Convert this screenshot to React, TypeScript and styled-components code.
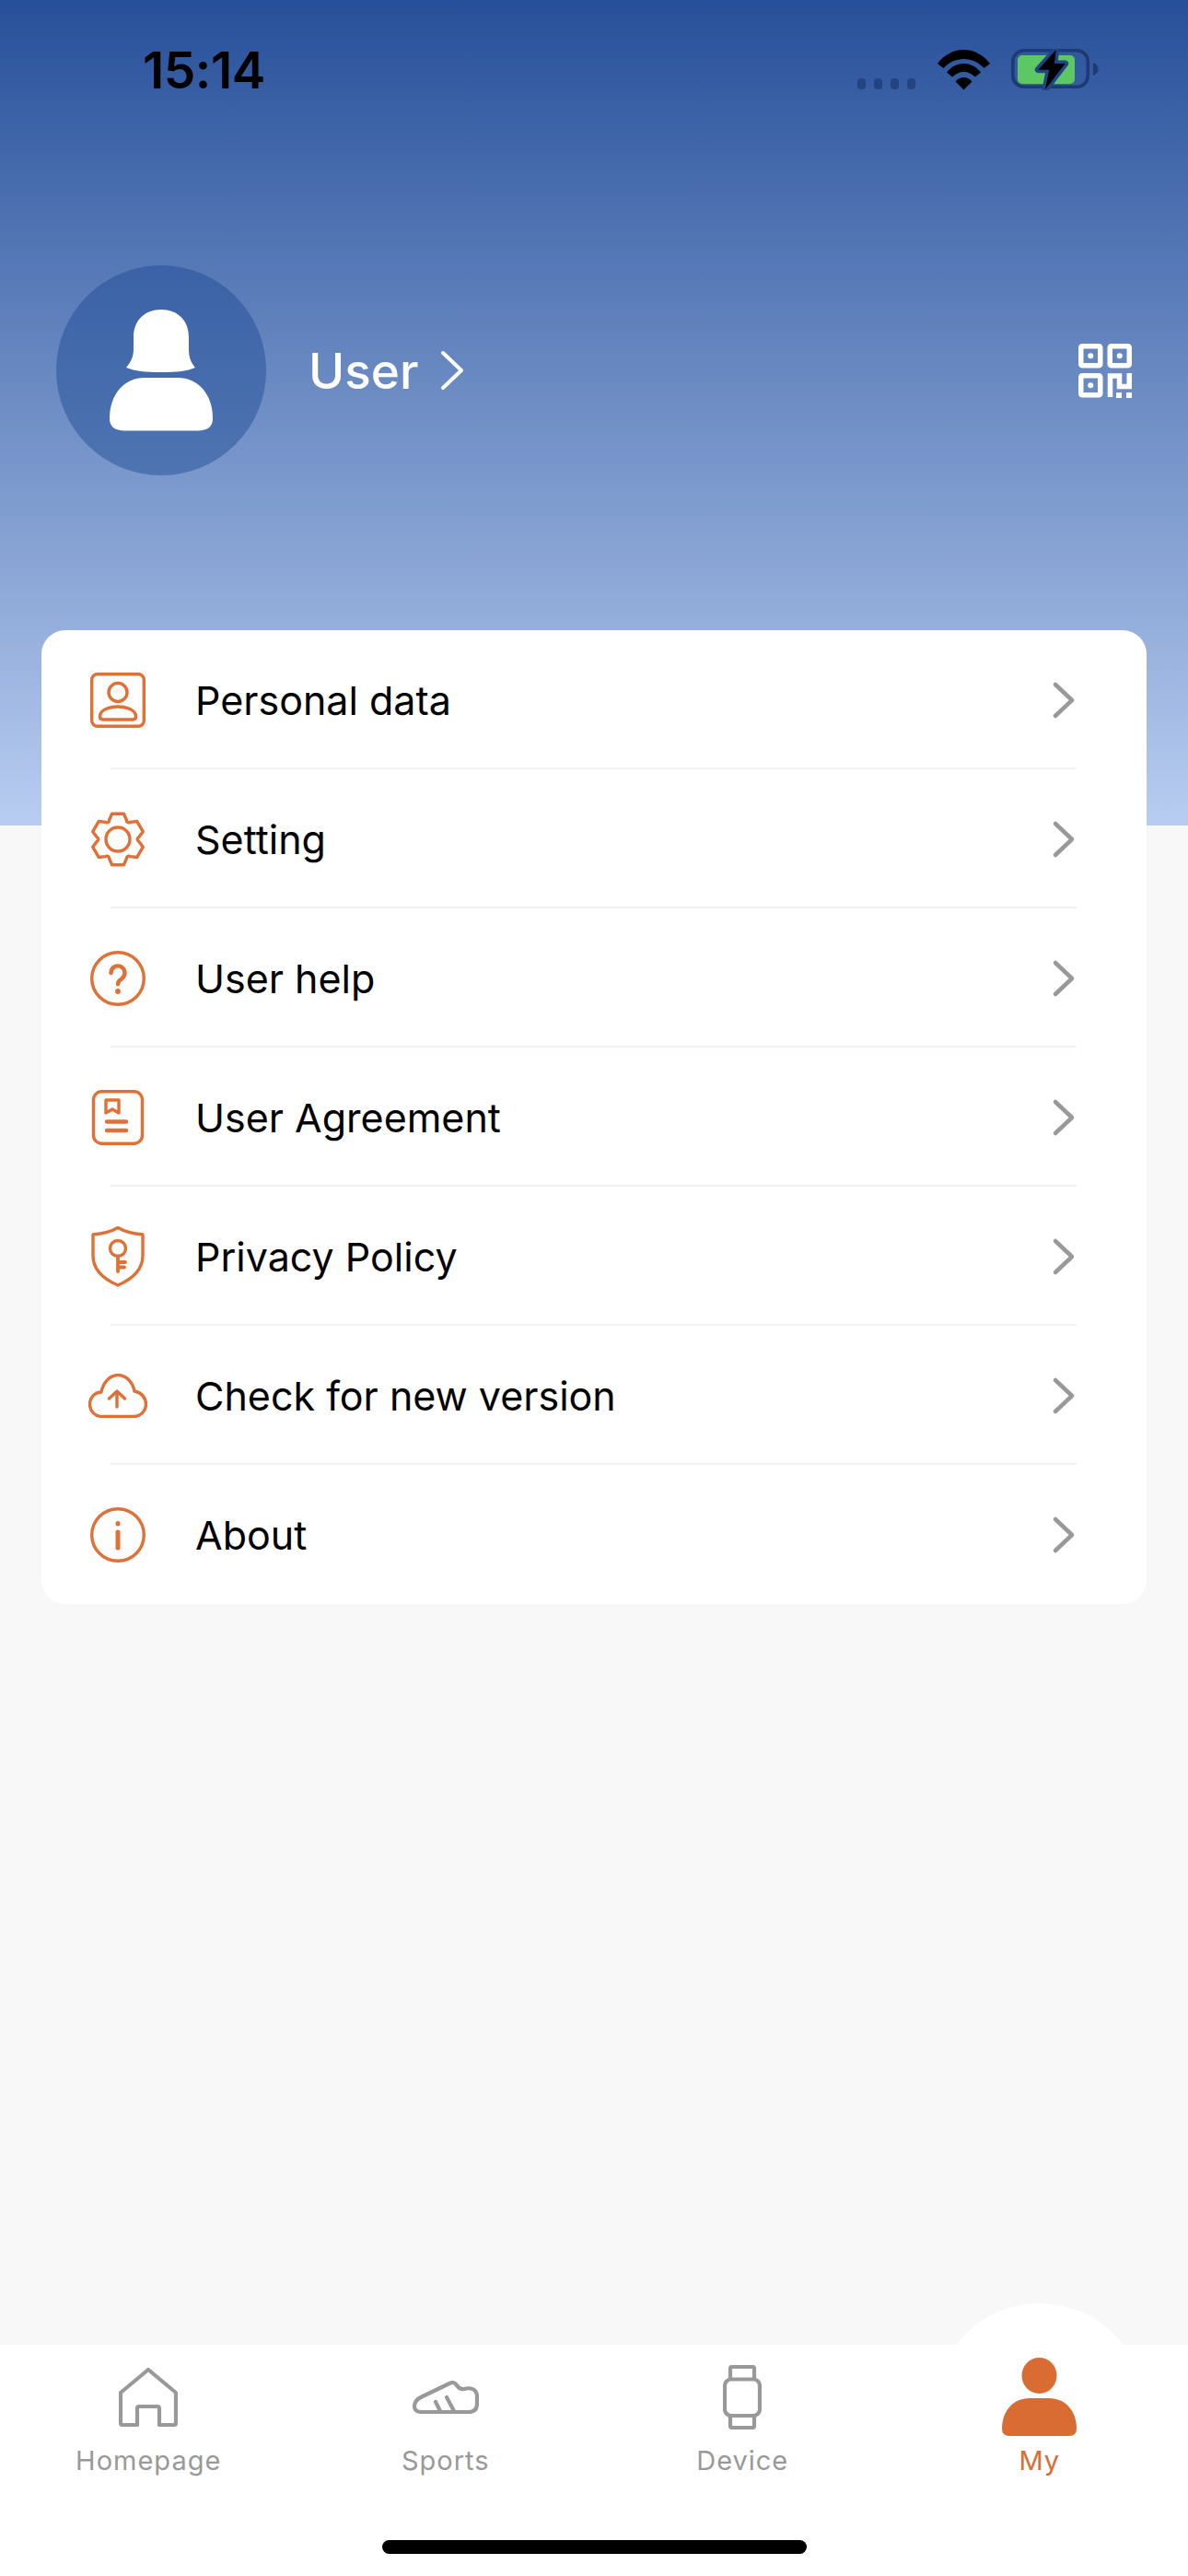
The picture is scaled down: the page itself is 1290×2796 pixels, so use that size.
import React from "react";
import styled, { createGlobalStyle } from "styled-components";

const ORANGE = "#df7138";
const ACTIVE = "#d96c33";
const GREY = "#999999";

const GlobalStyle = createGlobalStyle`
  html, body {
    margin: 0;
    padding: 0;
    background: #f8f8f8;
  }
  * {
    box-sizing: border-box;
  }
`;

// 6 teeth gear, same curve for each tooth
const gearPath = () => {
  const pt = (deg: number, r: number) => {
    const a = ((deg - 90) * Math.PI) / 180;
    return `${(30 + r * Math.cos(a)).toFixed(2)} ${(30 + r * Math.sin(a)).toFixed(2)}`;
  };
  let d = `M${pt(-24, 23)}`;
  for (let i = 0; i < 6; i++) {
    const a = i * 60;
    d += ` L${pt(a - 13, 28.5)} L${pt(a + 13, 28.5)} L${pt(a + 24, 23)} Q${pt(a + 30, 19.5)} ${pt(a + 36, 23)}`;
  }
  return d + "Z";
};

const LineIcon = styled.svg.attrs({ fill: "none" })`
  stroke: ${ORANGE};
  stroke-width: 3.4;
  stroke-linecap: round;
  stroke-linejoin: round;
`;

const ProfileIcon = () => (
  <LineIcon width="60" height="60" viewBox="0 0 60 60">
    <rect x="1.7" y="1.7" width="56.6" height="56.6" rx="6" />
    <circle cx="30" cy="21.5" r="10" />
    <path d="M10.5 47.5C10.5 41 20 37 30 37s19.5 4 19.5 10.5q0 3.5-3 3.5H13.5q-3 0-3-3.5Z" />
  </LineIcon>
);

const GearIcon = () => (
  <LineIcon width="60" height="60" viewBox="0 0 60 60">
    <path d={gearPath()} />
    <circle cx="30" cy="30" r="13" />
  </LineIcon>
);

const HelpIcon = () => (
  <LineIcon width="60" height="60" viewBox="0 0 60 60">
    <circle cx="30" cy="30" r="28.3" />
    <path strokeWidth="4.4" d="M22.5 24a7.5 7.5 0 1 1 11.5 6.3c-2.6 1.6-4 3-4 6" />
    <circle cx="30" cy="44" r="1.4" strokeWidth="3" />
  </LineIcon>
);

const AgreementIcon = () => (
  <LineIcon width="60" height="60" viewBox="0 0 60 60">
    <rect x="3.5" y="1.7" width="53" height="56.6" rx="9" />
    <path d="M17 11H31V25L24 21L17 25Z" />
    <path strokeWidth="4.4" d="M18 34.5H39M18 44H39" />
  </LineIcon>
);

const ShieldIcon = () => (
  <LineIcon width="60" height="66" viewBox="0 0 60 66">
    <path d="M30 1.5C36 5 45 8 57 9V32C57 48 44 58 30 64C16 58 3 48 3 32V9C15 8 24 5 30 1.5Z" />
    <circle cx="30" cy="24" r="8.5" />
    <path strokeWidth="3.8" d="M30 32.5V49M30 39H38M30 44.5H37" />
  </LineIcon>
);

const CloudIcon = () => (
  <LineIcon width="64" height="48" viewBox="0 0 64 48">
    <path d="M15 46.5C7 46.5 1.5 40.5 1.5 33C1.5 25 8 20 14 20C16 9 24 1.5 32 1.5C41 1.5 48 9 50 19C57 20 62.5 26 62.5 33C62.5 41 56 46.5 49 46.5Z" />
    <path d="M31 19V36M22.5 27L31 19L39.5 27" />
  </LineIcon>
);

const InfoIcon = () => (
  <LineIcon width="60" height="60" viewBox="0 0 60 60">
    <circle cx="30" cy="30" r="28.3" />
    <path strokeWidth="5" d="M30 27V44M30 17.5V18" />
  </LineIcon>
);

const rows = [
  { label: "Personal data", icon: <ProfileIcon /> },
  { label: "Setting", icon: <GearIcon /> },
  { label: "User help", icon: <HelpIcon /> },
  { label: "User Agreement", icon: <AgreementIcon /> },
  { label: "Privacy Policy", icon: <ShieldIcon /> },
  { label: "Check for new version", icon: <CloudIcon /> },
  { label: "About", icon: <InfoIcon /> },
];

const HomeIcon = () => (
  <svg width="64" height="64" viewBox="0 0 64 64" fill="none" stroke={GREY} strokeWidth="4.2" strokeLinejoin="round">
    <path d="M20 62H4Q2 62 2 60V27L32 2L62 27V60Q62 62 60 62H44V44Q44 42 42 42H22Q20 42 20 44Z" />
  </svg>
);

const ShoeIcon = () => (
  <svg width="72" height="36" viewBox="0 0 72 36" fill="none" stroke={GREY} strokeWidth="4.2" strokeLinecap="round" strokeLinejoin="round">
    <path d="M10 34C4 34 2 31 2 28C2 23 5 20 9 18L40 3C44 1 46 2 48 5C50 8 52 10 56 9C63 7 69 9 70 16V25C70 31 67 34 61 34Z" />
    <path d="M25 23L30 33M37 18L45 33" />
  </svg>
);

const WatchIcon = () => (
  <svg width="42" height="70" viewBox="0 0 42 70" fill="none" stroke={GREY} strokeWidth="4.2" strokeLinejoin="round">
    <rect x="2" y="15.5" width="38" height="39.5" rx="7" />
    <path d="M8 15.5V4Q8 2 10 2H32Q34 2 34 4V15.5M8 55V66Q8 68 10 68H32Q34 68 34 66V55" />
  </svg>
);

const PersonIcon = () => (
  <svg width="81" height="85" viewBox="0 0 81 85" fill={ACTIVE}>
    <ellipse cx="40.5" cy="19.5" rx="19" ry="19.5" />
    <path d="M0 77C0 58 12 44 30 44H51C69 44 81 58 81 77Q81 85 73 85H8Q0 85 0 77Z" />
  </svg>
);

const tabs = [
  { label: "Homepage", icon: <HomeIcon /> },
  { label: "Sports", icon: <ShoeIcon /> },
  { label: "Device", icon: <WatchIcon /> },
  { label: "My", icon: <PersonIcon />, active: true },
];

const App = () => {
  return (
    <Page>
      <GlobalStyle />
      <Hero>
        <StatusBar>
          <Time>15:14</Time>
          <StatusIcons>
            <SignalDots>
              <Dot />
              <Dot />
              <Dot />
              <Dot />
            </SignalDots>
            <svg width="57" height="44" viewBox="0 0 57 44" fill="#000">
              <path d="M0 15C7 6 17 0 28.5 0S50 6 57 15L50.5 20C44.5 13.5 37 10 28.5 10S12.5 13.5 6.5 20Z" />
              <path d="M10 24.5C15 18.5 21 15 28.5 15S42 18.5 47 24.5L41 29.5C37 26 33 24 28.5 24S20 26 16 29.5Z" />
              <path d="M19.5 34.5C22 31.5 25 30 28.5 30S35 31.5 37.5 34.5L28.5 43.5Z" />
            </svg>
            <svg width="95" height="45" viewBox="0 0 95 45">
              <rect x="1.8" y="1.8" width="81.5" height="39.5" rx="12" fill="none" stroke="#1d3a73" strokeWidth="3.6" />
              <rect x="7" y="7" width="62" height="31" rx="5" fill="#5dc763" />
              <path d="M89 15C92.500 16.500 94.500 19 94.500 22S92.500 27.500 89 29Z" fill="#1d3a73" />
              <polygon points="48.7,1 29.3,22.7 41.3,22.7 37,44 58.7,16 47,16" fill="#000" stroke="#1f4488" strokeWidth="7" paintOrder="stroke" strokeLinejoin="round" />
            </svg>
          </StatusIcons>
        </StatusBar>

        <Profile>
          <Avatar>
            <svg width="112" height="132" viewBox="0 0 112 132" fill="#fff">
              <path d="M56 0C38 0 26 12 26 30V42C26 52 23 57 18 63C28 67 38 68 56 68C74 68 84 67 93 63C88 57 86 52 86 42V30C86 12 74 0 56 0Z" />
              <path d="M38 74H74C96 74 112 92 112 118C112 128 106 131 96 131.5H16C6 131 0 128 0 118C0 92 16 74 38 74Z" />
            </svg>
          </Avatar>
          <UserName>User</UserName>
          <UserChevron width="26" height="44" viewBox="0 0 26 44" fill="none">
            <path d="M3 3L23 22L3 41" />
          </UserChevron>
          <QrButton>
            <svg width="58" height="59" viewBox="0 0 58 59" fill="none" stroke="#fff" strokeWidth="5.5">
              <rect x="2.75" y="2.75" width="21" height="21" rx="1.5" />
              <rect x="34.25" y="2.75" width="21" height="21" rx="1.5" />
              <rect x="2.75" y="34.75" width="21" height="21" rx="1.5" />
              <circle cx="13.25" cy="13.25" r="3" fill="#fff" stroke="none" />
              <circle cx="44.75" cy="13.25" r="3" fill="#fff" stroke="none" />
              <circle cx="13.25" cy="45.25" r="3" fill="#fff" stroke="none" />
              <path d="M34.5 58V35H44.5V46.5H55.25V32" />
              <rect x="41" y="53" width="6" height="6" fill="#fff" stroke="none" />
              <rect x="52" y="53" width="6" height="6" fill="#fff" stroke="none" />
            </svg>
          </QrButton>
        </Profile>
      </Hero>

      <Card>
        {rows.map((row, i) => (
          <React.Fragment key={row.label}>
            {i > 0 && <Divider />}
            <Row>
              <RowIcon>{row.icon}</RowIcon>
              <RowLabel>{row.label}</RowLabel>
              <RowChevron width="26" height="42" viewBox="0 0 26 42" fill="none">
                <path d="M4 4L22 21L4 38" />
              </RowChevron>
            </Row>
          </React.Fragment>
        ))}
      </Card>

      <Spacer />

      <TabBar>
        <Tabs>
          {tabs.map((tab) => (
            <Tab key={tab.label}>
              <TabIcon>{tab.icon}</TabIcon>
              <TabLabel $active={tab.active}>{tab.label}</TabLabel>
            </Tab>
          ))}
        </Tabs>
        <HomeIndicator />
      </TabBar>
    </Page>
  );
};

const Page = styled.div`
  display: flex;
  flex-direction: column;
  width: 1290px;
  height: 2796px;
  overflow: hidden;
  background: #f8f8f8;
  font-family: Inter, "Liberation Sans", sans-serif;
`;

const Hero = styled.header`
  flex: none;
  height: 896px;
  padding-top: 54px;
  background: linear-gradient(180deg, #27509a 0%, #b8cdf1 100%);
`;

const StatusBar = styled.div`
  display: flex;
  justify-content: space-between;
  align-items: flex-end;
  height: 44px;
  padding: 0 97px 0 155px;
`;

const Time = styled.span`
  font-weight: 600;
  font-size: 55px;
  line-height: 44px;
  letter-spacing: -0.5px;
  color: #000;
`;

const StatusIcons = styled.div`
  display: flex;
  align-items: flex-end;
  gap: 23px;
`;

const SignalDots = styled.div`
  display: flex;
  gap: 9px;
  padding-bottom: 1px;
  margin-right: 1px;
`;

const Dot = styled.span`
  width: 9px;
  height: 12px;
  border-radius: 4px;
  background: #24447f;
`;

const Profile = styled.div`
  display: flex;
  align-items: center;
  margin-top: 190px;
  padding: 0 61px;
`;

const Avatar = styled.div`
  display: flex;
  align-items: center;
  justify-content: center;
  flex: none;
  width: 228px;
  height: 228px;
  margin-right: 46px;
  border-radius: 50%;
  background: linear-gradient(180deg, #3b62a6 0%, #4e74b1 100%);
`;

const UserName = styled.span`
  padding-top: 2px;
  font-size: 53px;
  font-weight: 500;
  line-height: 60px;
  color: #fff;
`;

const UserChevron = styled.svg`
  margin-left: 24px;
  stroke: #fff;
  stroke-width: 4;
  stroke-linecap: round;
  stroke-linejoin: round;
`;

const QrButton = styled.div`
  display: flex;
  margin-left: auto;
`;

const Card = styled.section`
  flex: none;
  margin: -212px 45px 0;
  padding-bottom: 2px;
  border-radius: 26px;
  background: #fff;
`;

const Row = styled.div`
  display: flex;
  align-items: center;
  height: 149px;
  padding: 2px 77px 0 48px;
`;

const RowIcon = styled.div`
  display: flex;
  align-items: center;
  justify-content: center;
  flex: none;
  width: 70px;
  height: 70px;
  margin-right: 49px;
`;

const RowLabel = styled.span`
  flex: 1;
  font-size: 43px;
  line-height: 54px;
  color: #000;
`;

const RowChevron = styled.svg`
  stroke: ${GREY};
  stroke-width: 4.5;
  stroke-linecap: round;
  stroke-linejoin: round;
`;

const Divider = styled.div`
  height: 2px;
  margin: 0 76px 0 75px;
  background: #f2f2f2;
`;

const Spacer = styled.div`
  flex: 1;
`;

const TabBar = styled.nav`
  position: relative;
  display: flex;
  flex-direction: column;
  flex: none;
  height: 251px;
  background: #fff;

  &::before {
    content: "";
    position: absolute;
    top: -45px;
    left: 1015px;
    width: 228px;
    height: 228px;
    border-radius: 50%;
    background: #fff;
  }
`;

const Tabs = styled.div`
  position: relative;
  display: grid;
  grid-template-columns: repeat(4, 1fr);
  flex: 1;
`;

const Tab = styled.div`
  display: flex;
  flex-direction: column;
  align-items: center;
  padding-top: 13px;
`;

const TabIcon = styled.div`
  display: flex;
  align-items: center;
  justify-content: center;
  height: 87px;
`;

const TabLabel = styled.span<{ $active?: boolean }>`
  margin-top: 8px;
  font-size: 29px;
  line-height: 36px;
  letter-spacing: 1px;
  color: ${(p) => (p.$active ? ACTIVE : GREY)};
`;

const HomeIndicator = styled.div`
  flex: none;
  width: 461px;
  height: 15px;
  margin: 0 0 24px 415px;
  border-radius: 8px;
  background: #000;
`;

export default App;
